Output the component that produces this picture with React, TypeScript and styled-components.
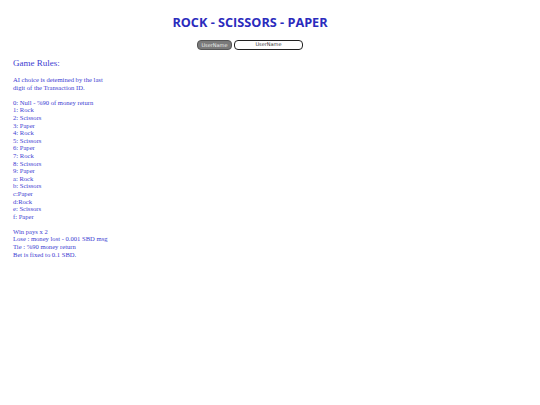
import React from "react";
import styled, { createGlobalStyle } from "styled-components";

const Global = createGlobalStyle`
  html, body { margin: 0; padding: 0; background: #fff; }
  body { font-family: "Liberation Serif", "Times New Roman", serif; }
`;

const Page = styled.div`
  width: 500px;
  padding-top: 14px;
`;

const Title = styled.h1`
  margin: 0;
  text-align: center;
  font-family: "Open Sans", "Noto Sans", sans-serif;
  font-weight: bold;
  font-size: 12.7px;
  line-height: 16px;
  color: #2b2bbd;
`;

const Form = styled.div`
  display: flex;
  justify-content: center;
  gap: 2px;
  margin-top: 10px;
`;

const Label = styled.div`
  width: 35px;
  height: 10px;
  box-sizing: border-box;
  border-radius: 4px;
  background: #7a7a7a;
  border: 1px solid #555;
  color: #eee;
  font-family: "DejaVu Sans", sans-serif;
  font-size: 5px;
  line-height: 8px;
  text-align: center;
`;

const Input = styled.div`
  width: 69px;
  height: 10px;
  box-sizing: border-box;
  border-radius: 4px;
  border: 1.5px solid #222;
  background: #fff;
  color: #333;
  font-family: "DejaVu Sans", sans-serif;
  font-size: 5px;
  line-height: 7px;
  text-align: center;
`;

const Rules = styled.div`
  padding-left: 13px;
  margin-top: 7px;
  color: #3d3dd2;
`;

const Heading = styled.div`
  font-size: 9px;
  line-height: 12px;
  margin-bottom: 7px;
`;

const Block = styled.div`
  font-size: 6.6px;
  line-height: 7.6px;
  margin-bottom: 7.6px;
`;

const Line = styled.div``;

const mapping = [
  "0: Null - %90 of money return",
  "1: Rock",
  "2: Scissors",
  "3: Paper",
  "4: Rock",
  "5: Scissors",
  "6: Paper",
  "7: Rock",
  "8: Scissors",
  "9: Paper",
  "a: Rock",
  "b: Scissors",
  "c:Paper",
  "d:Rock",
  "e: Scissors",
  "f: Paper",
];

const payouts = [
  "Win pays x 2",
  "Lose : money lost - 0.001 SBD msg",
  "Tie : %90 money return",
  "Bet is fixed to 0.1 SBD.",
];

export default function App() {
  return (
    <>
      <Global />
      <Page>
        <Title>ROCK - SCISSORS - PAPER</Title>
        <Form>
          <Label>UserName</Label>
          <Input>UserName</Input>
        </Form>
        <Rules>
          <Heading>Game Rules:</Heading>
          <Block>
            <Line>AI choice is detemined by the last</Line>
            <Line>digit of the Transaction ID.</Line>
          </Block>
          <Block>
            {mapping.map((m) => (
              <Line key={m}>{m}</Line>
            ))}
          </Block>
          <Block>
            {payouts.map((p) => (
              <Line key={p}>{p}</Line>
            ))}
          </Block>
        </Rules>
      </Page>
    </>
  );
}
